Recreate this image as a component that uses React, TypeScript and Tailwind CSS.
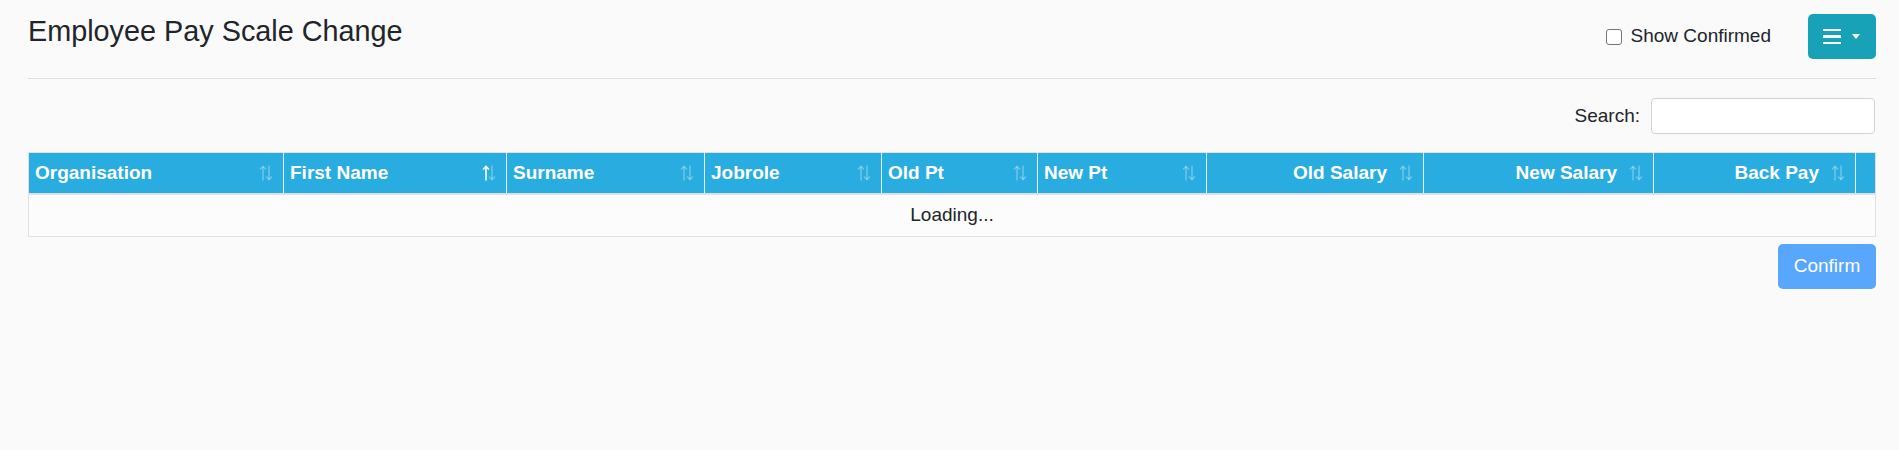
import React from 'react'

type Col = { label: string; width: string; align: 'left' | 'right'; active?: boolean }

const columns: Col[] = [
  { label: 'Organisation', width: 'w-[255px]', align: 'left' },
  { label: 'First Name', width: 'w-[223px]', align: 'left', active: true },
  { label: 'Surname', width: 'w-[198px]', align: 'left' },
  { label: 'Jobrole', width: 'w-[177px]', align: 'left' },
  { label: 'Old Pt', width: 'w-[156px]', align: 'left' },
  { label: 'New Pt', width: 'w-[169px]', align: 'left' },
  { label: 'Old Salary', width: 'w-[217px]', align: 'right' },
  { label: 'New Salary', width: 'w-[230px]', align: 'right' },
  { label: 'Back Pay', width: 'w-[202px]', align: 'right' },
]

function SortIcon({ active }: { active?: boolean }) {
  return (
    <svg width="14" height="16" viewBox="0 0 14 16" fill="none" className="shrink-0">
      <g stroke="#ffffff" strokeOpacity={active ? 1 : 0.3} strokeWidth="1.6">
        <line x1="4" y1="1.5" x2="4" y2="15.5" />
        <polyline points="1,4.5 4,1.5 7,4.5" />
      </g>
      <g stroke="#ffffff" strokeOpacity="0.3" strokeWidth="1.6">
        <line x1="10" y1="0.5" x2="10" y2="14.5" />
        <polyline points="7,11.5 10,14.5 13,11.5" />
      </g>
    </svg>
  )
}

export default function App() {
  return (
    <div className="min-h-screen bg-[#fafafa] pl-[28px] pr-[23px] pt-[14px] font-['Liberation_Sans',Arial,sans-serif] text-[19px] text-[#212529]">
      <div className="flex items-start justify-between">
        <h3 className="text-[28.8px] leading-[1.2] font-normal">Employee Pay Scale Change</h3>
        <div className="flex items-center gap-[37px]">
          <label className="flex items-center gap-[9px]">
            <input type="checkbox" className="size-[16px] appearance-none rounded-[3px] border border-[#767676] bg-white" />
            <span>Show Confirmed</span>
          </label>
          <button className="flex h-[45px] w-[68px] items-center gap-[11px] rounded-[5px] bg-[#17a2b8] pl-[15px]">
            <span className="flex w-[18px] flex-col gap-[4px]">
              <span className="h-[2.5px] bg-white" />
              <span className="h-[2.5px] bg-white" />
              <span className="h-[2.5px] bg-white" />
            </span>
            <span className="h-0 w-0 border-x-[4px] border-t-[5px] border-x-transparent border-t-white" />
          </button>
        </div>
      </div>

      <div className="mt-[19px] border-t border-[#dfdfdf]" />

      <div className="mt-[19px] flex items-center justify-end gap-[11px] pr-[1px]">
        <span>Search:</span>
        <input className="h-[36px] w-[224px] rounded-[4px] border border-[#ced4da] bg-white" />
      </div>

      <div className="mt-[18px] pr-[1px]">
        <table className="w-full table-fixed border-collapse border border-[#dee2e6]">
          <thead>
            <tr className="bg-[#29acdf] text-white">
              {columns.map((c, i) => (
                <th
                  key={c.label}
                  className={`${c.width} h-[41px] border-b-2 border-b-[#dee2e6] pl-[6px] pr-[10px] font-bold ${i > 0 ? 'border-l border-l-[#e4f3fa]' : ''}`}
                >
                  <div className={`flex items-center gap-[12px] ${c.align === 'left' ? 'justify-between' : 'justify-end'}`}>
                    <span>{c.label}</span>
                    <SortIcon active={c.active} />
                  </div>
                </th>
              ))}
              <th className="w-[20px] border-b-2 border-l border-b-[#dee2e6] border-l-[#e4f3fa]" />
            </tr>
          </thead>
          <tbody>
            <tr className="bg-[#fcfcfc]">
              <td colSpan={10} className="h-[43px] text-center font-normal">
                Loading...
              </td>
            </tr>
          </tbody>
        </table>
      </div>

      <div className="mt-[7px] flex justify-end">
        <button className="h-[45px] w-[98px] rounded-[5px] bg-[#58a7fd] text-white">Confirm</button>
      </div>
    </div>
  )
}
